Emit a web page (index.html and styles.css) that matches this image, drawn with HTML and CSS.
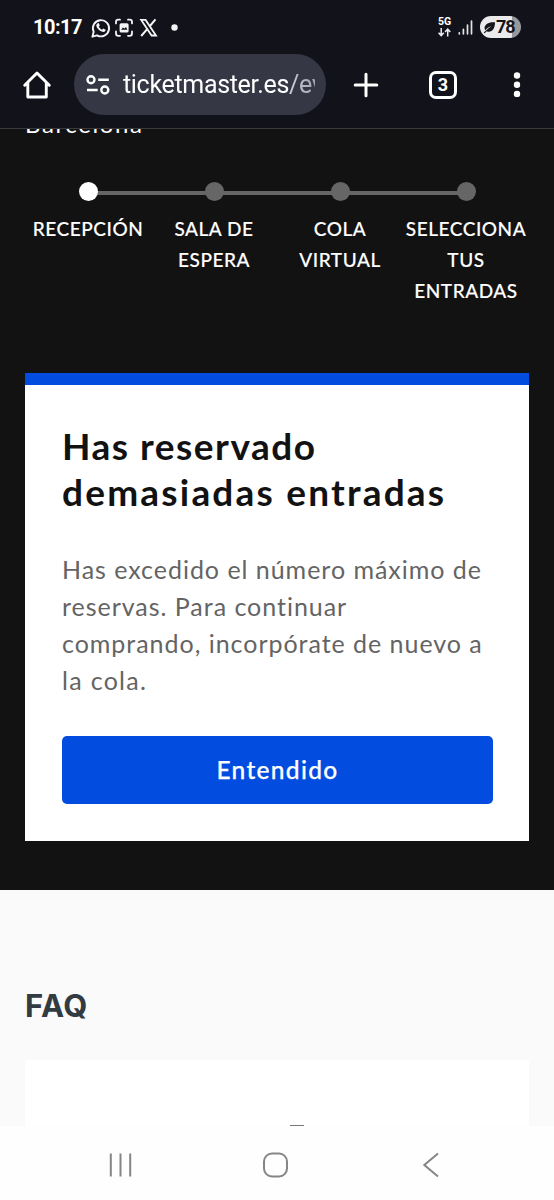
FILE: index.html
```html
<!DOCTYPE html>
<html lang="es">
<head>
<meta charset="utf-8">
<title>Ticketmaster</title>
<link rel="stylesheet" href="styles.css">
</head>
<body>
<header class="chrome">
  <div class="status">
    <span class="clock">10:17</span>
    <svg class="notifications" width="92" height="24" viewBox="0 0 92 24" fill="none" stroke="#f4f4f6">
      <path d="M2.4 20.7 L3.7 15.8 A8.1 8.1 0 1 1 7 19.3 Z" stroke-width="1.9" stroke-linejoin="round"/>
      <path d="M7.2 7.7 C8 6.7 8.8 7 9.2 8 L9.7 9.3 C9.8 9.8 9 10.4 8.8 10.8 C9.6 12.3 10.7 13.2 12.1 13.8 L13.3 12.5 L15.6 13.7 C16 14.3 14.9 16 13.3 15.9 C9.5 15.3 6.2 11.7 6.3 9.2 C6.4 8.5 6.8 8.1 7.2 7.7 Z" fill="#f4f4f6" stroke="none"/>
      <path d="M26 7.4 V6 Q26 3.7 28.3 3.7 H30 M38 3.7 H39.7 Q42 3.7 42 6 V7.4 M42 15.4 V17.5 Q42 19.8 39.7 19.8 H38 M30 19.8 H28.3 Q26 19.8 26 17.5 V15.4" stroke-width="1.8" stroke-linecap="round"/>
      <rect x="29.6" y="7.2" width="9" height="9.4" rx="1.6" fill="#f4f4f6" stroke="none"/>
      <path d="M31 13.8 L33 11.4 L34.5 12.6 L36 11 L37.4 13.8 Z" fill="#12131a" stroke="none"/>
      <path d="M51.2 3.9 H55.6 L66 19.5 H61.6 Z" stroke-width="1.8"/>
      <path d="M65.5 3.4 L59.5 10.5 M57.4 12.8 L51.2 20" stroke-width="2"/>
      <circle cx="84.5" cy="11.5" r="3.2" fill="#f4f4f6" stroke="none"/>
    </svg>
    <span class="network"><span class="generation">5G</span>
      <svg width="13" height="9" viewBox="0 0 13 9" fill="none" stroke="#eeeef0" stroke-width="1.5"><path d="M3.2 0 V7.4 M.6 4.8 L3.2 7.6 L5.8 4.8 M9.7 8.6 V1.3 M7.1 3.9 L9.7 1.1 L12.3 3.9"/></svg>
    </span>
    <svg class="signal" width="15" height="17" viewBox="0 0 15 17" fill="none" stroke="#e4e4e6" stroke-width="1.7" stroke-linecap="round"><path d="M1.3 13.8 V14.8 M5.4 10.3 V14.8 M9.5 6 V14.8 M13.5 2 V14.8"/></svg>
    <span class="battery">
      <svg width="13" height="13" viewBox="0 0 13 13"><path d="M12 1.3 C8 .6 2.2 2.2 1.6 6.3 C1.4 8 2 8.8 2.4 9.2 C4 7.2 6 6 8.5 5 C6.3 6.7 4 8.4 .7 11.5 L1.8 12.2 L3.5 10.3 C8.4 12.3 12 8.4 12 1.3 Z" fill="#15161b"/></svg>
      <span>78</span>
    </span>
  </div>
  <div class="toolbar">
    <svg class="home" width="30" height="30" viewBox="0 0 30 30" fill="none" stroke="#fff" stroke-width="2.9" stroke-linejoin="round" stroke-linecap="round"><path d="M2.7 15.2 L15 3 L27.3 15.2 M5.8 13 V27 H24.3 V13"/></svg>
    <div class="address">
      <svg width="24" height="22" viewBox="0 0 24 22" fill="none" stroke="#fff" stroke-width="2.4"><circle cx="5" cy="5.7" r="3.5"/><path d="M12.2 5.7 H22.8 M1 16 H11.7"/><circle cx="18.8" cy="16" r="3.5"/></svg>
      <span class="url">ticketmaster.es<span class="path">/ev</span></span>
    </div>
    <svg class="plus" width="26" height="26" viewBox="0 0 26 26" stroke="#fff" stroke-width="3" stroke-linecap="round"><path d="M2.2 13 H23.8 M13 2.2 V23.8"/></svg>
    <span class="tabs">3</span>
    <svg class="more" width="8" height="26" viewBox="0 0 8 26" fill="#fff"><circle cx="4" cy="3.5" r="3.2"/><circle cx="4" cy="12.7" r="3.2"/><circle cx="4" cy="21.9" r="3.2"/></svg>
  </div>
</header>
<main>
  <section class="queue">
    <div class="venue"><span>Barcelona</span></div>
    <ol class="steps">
      <li class="step current"><i></i><span>RECEPCIÓN</span></li>
      <li class="step"><i></i><span>SALA DE<br>ESPERA</span></li>
      <li class="step"><i></i><span>COLA<br>VIRTUAL</span></li>
      <li class="step last"><i></i><span>SELECCIONA<br>TUS<br>ENTRADAS</span></li>
    </ol>
    <article class="notice">
      <h1><span class="h-a">Has reservado</span><span class="h-b">demasiadas entradas</span></h1>
      <p><span>Has excedido el número máximo de</span><span>reservas. Para continuar</span><span>comprando, incorpórate de nuevo a</span><span class="p-d">la cola.</span></p>
      <button class="confirm">Entendido</button>
    </article>
  </section>
  <section class="faq">
    <h2>FAQ</h2>
    <div class="questions"><i></i></div>
  </section>
</main>
<nav class="system">
  <svg width="554" height="74" viewBox="0 0 554 74" fill="none" stroke="#858585" stroke-width="2"><path d="M110.8 27.5 V50.5 M120.5 27.5 V50.5 M130.2 27.5 V50.5"/><rect x="264" y="27.5" width="23" height="23" rx="8"/><path d="M438 27.5 L424.3 39 L438 50.5"/></svg>
</nav>
</body>
</html>
```
FILE: styles.css
```css
* { box-sizing: border-box; }
body { margin: 0; width: 554px; height: 1200px; overflow: hidden; display: flex; flex-direction: column; background: #fafafa; font-family: Lato, sans-serif; }
svg { display: block; flex: none; }

.chrome { flex: none; height: 129px; background: #12131a; border-bottom: 1px solid #3a3a3b; color: #fff; font-family: Roboto, sans-serif; }
.status { height: 54px; padding-left: 33px; display: flex; align-items: center; }
.clock { width: 57px; font-size: 20px; font-weight: 700; line-height: 24px; letter-spacing: -.5px; }
.notifications { margin-top: 1px; }
.network { margin-left: 255px; width: 15px; display: flex; flex-direction: column; align-items: center; gap: 1px; }
.generation { font-size: 10.5px; font-weight: 700; line-height: 10px; }
.signal { margin-left: 6px; }
.battery { margin-left: 7px; width: 41px; height: 22px; border-radius: 11px; padding-left: 3px; display: flex; align-items: center; background: linear-gradient(90deg, #ebebed 32px, #98989c 32px); color: #15161b; font-size: 18px; font-weight: 700; letter-spacing: -1px; line-height: 22px; }

.toolbar { height: 61px; display: flex; align-items: center; padding-left: 22px; }
.address { margin-left: 22px; width: 252px; height: 61px; border-radius: 31px; background: #353745; display: flex; align-items: center; padding-left: 12px; }
.url { margin-left: 13px; width: 192px; overflow: hidden; white-space: nowrap; font-size: 25px; line-height: 34px; letter-spacing: -.32px; -webkit-mask-image: linear-gradient(90deg, #000 165px, rgba(0,0,0,.7) 192px); }
.path { color: #d0d1dc; }
.plus { margin-left: 27px; }
.tabs { margin-left: 50px; width: 28px; height: 28px; border: 3px solid #fff; border-radius: 7px; font-size: 18px; font-weight: 700; line-height: 22px; text-align: center; }
.more { margin-left: 56px; }

.queue { height: 761px; padding: 0 25px; background: #121212; }
.venue { height: 5px; overflow: hidden; display: flex; align-items: flex-end; color: #fff; font-size: 24px; line-height: 20px; letter-spacing: 1.6px; }
.steps { list-style: none; margin: 0; padding: 48px 0 0; height: 239px; display: flex; }
.step { width: 126px; flex: none; display: flex; flex-direction: column; align-items: center; background: linear-gradient(#666, #666) 63px 9px / 63px 4px no-repeat, linear-gradient(#666, #666) 0 9px / 63px 4px no-repeat; color: #fff; }
.step.current { background-size: 63px 4px, 0 0; }
.step.last { background-size: 0 0, 63px 4px; }
.step i { width: 19px; height: 19px; border-radius: 50%; background: #666; }
.step.current i { background: #fff; }
.step span { margin-top: 12px; white-space: nowrap; text-align: center; font-size: 19px; font-weight: 500; line-height: 31px; letter-spacing: .55px; -webkit-text-stroke: .15px #fff; }

.notice { height: 468px; border-top: 12px solid #024ddf; background: #fff; padding: 38px 37px 0; }
h1 { margin: 0; color: #121212; font-size: 37px; font-weight: 700; line-height: 46px; }
h1 span, p span { display: block; white-space: nowrap; }
.h-a { letter-spacing: 1.5px; }
.h-b { letter-spacing: 2.2px; }
p { margin: 36px 0 0; color: #646464; font-size: 25px; line-height: 37px; letter-spacing: .97px; }
.p-d { letter-spacing: 1.3px; }
.confirm { display: block; margin: 37px 0 0; padding: 0 0 2px; width: 431px; height: 68px; border: 0; border-radius: 5px; background: #024ddf; color: #fff; font: 500 24.5px Lato, sans-serif; letter-spacing: 1.3px; -webkit-text-stroke: .25px #fff; }

.faq { height: 236px; padding: 0 25px; }
h2 { margin: 0; padding-top: 96px; color: #333b42; font: 700 31px/40px Inter, sans-serif; letter-spacing: .5px; height: 170px; }
.questions { height: 66px; background: #fff; display: flex; align-items: flex-end; justify-content: center; }
.questions i { width: 14px; height: 1px; margin-left: 40px; background: #777; }
.system { flex: none; height: 74px; background: #fefefe; }
```
